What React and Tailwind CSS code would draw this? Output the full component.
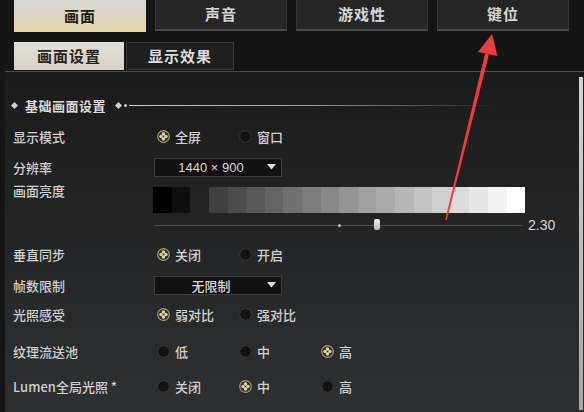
import React from 'react'

const FONT = "font-[family-name:'Noto_Sans_CJK_SC','Noto_Sans',sans-serif]"

function Radio({ on }) {
  if (on) {
    return (
      <svg width="13" height="13" viewBox="0 0 13 13" className="shrink-0">
        <circle cx="6.5" cy="6.5" r="5.8" fill="#2b2920" stroke="#ab9f74" strokeWidth="1.2" />
        <circle cx="6.5" cy="4.1" r="1.8" fill="#ddd3aa" />
        <circle cx="6.5" cy="8.9" r="1.8" fill="#ddd3aa" />
        <circle cx="4.1" cy="6.5" r="1.8" fill="#ddd3aa" />
        <circle cx="8.9" cy="6.5" r="1.8" fill="#ddd3aa" />
        <circle cx="6.5" cy="6.5" r="0.8" fill="#2b2920" />
      </svg>
    )
  }
  return (
    <svg width="13" height="13" viewBox="0 0 13 13" className="shrink-0">
      <circle cx="6.5" cy="6.5" r="5.8" fill="#121212" stroke="#3a3a3a" strokeWidth="1" />
    </svg>
  )
}

function Options({ items, selected }) {
  return (
    <div className="flex">
      {items.map((t, i) => (
        <div key={t} className="w-[82px] flex items-center gap-[5px]">
          <Radio on={i === selected} />
          <span className="text-[13px] leading-none text-[#d2d2d2] font-medium">{t}</span>
        </div>
      ))}
    </div>
  )
}

function Select({ value, sans }) {
  return (
    <div className="w-[128px] h-[19px] bg-[#121212] border border-[#3e3e3e] flex items-center">
      <span
        className={`flex-1 text-center text-[13px] leading-none text-[#d8d8d8] ${
          sans ? "font-[family-name:'Liberation_Sans',sans-serif]" : 'font-medium'
        }`}
      >
        {value}
      </span>
      <svg width="9" height="6" viewBox="0 0 9 6" className="mr-[5px]">
        <path d="M0 0 H9 L4.5 5.5 Z" fill="#e0e0e0" />
      </svg>
    </div>
  )
}

function Row({ label, className = '', children }) {
  return (
    <div className={`flex items-center h-[20px] ${className}`}>
      <div className="w-[145px] pl-[8px] text-[13px] leading-none text-[#d0d0d0] font-medium">{label}</div>
      {children}
    </div>
  )
}

// stepped grey scale for the brightness calibration strip
const steps = Array.from({ length: 17 }, (_, i) => {
  const v = Math.round(64 + (i / 16) * 191)
  return `rgb(${v},${v},${v})`
})

function Tab({ label, active }) {
  return active ? (
    <div className="w-[132px] h-[32px] flex items-center justify-center bg-gradient-to-b from-[#d9d8d3] via-[#dcd6c4] to-[#e8d8a4] text-[#241d12] text-[15px] font-bold tracking-[1px]">
      {label}
    </div>
  ) : (
    <div className="w-[132px] h-[31px] flex items-center justify-center bg-[#262626] border-x border-[#363636] border-b-2 border-b-[#4a4a4a] text-[#d6d6d6] text-[15px] font-bold tracking-[1px]">
      {label}
    </div>
  )
}

export default function App() {
  return (
    <div className={`relative w-[584px] h-[412px] overflow-hidden bg-[#151515] ${FONT}`}>
      {/* main tabs */}
      <div className="flex gap-[9px] pl-[14px] h-[32px]">
        <Tab label="画面" active />
        <Tab label="声音" />
        <Tab label="游戏性" />
        <Tab label="键位" />
      </div>

      {/* sub tabs */}
      <div className="flex pl-[14px] mt-[10px] h-[28px] gap-[2px]">
        <div className="w-[110px] flex items-center justify-center bg-gradient-to-b from-[#e2e0da] to-[#d6d2c6] text-[#2a2418] text-[15px] font-bold tracking-[1px]">
          画面设置
        </div>
        <div className="w-[108px] flex items-center justify-center bg-[#1f1f1f] border border-[#383838] text-[#dcdcdc] text-[15px] font-bold tracking-[1px]">
          显示效果
        </div>
      </div>

      <div className="ml-[5px] mt-[1px] h-[1px] bg-[#4c4c4c]" />

      {/* panel */}
      <div className="ml-[5px] flex h-[340px] bg-gradient-to-b from-[#1b1b1b] to-[#2e3032]">
        <div className="flex-1 flex flex-col">
          {/* section header */}
          <div className="flex items-center h-[20px] mt-[23px] pl-[7px]">
            <span className="w-[5px] h-[5px] rotate-45 bg-[#cfcfcf]" />
            <span className="ml-[8px] text-[13px] leading-none text-[#dadada] font-bold tracking-[0.5px]">基础画面设置</span>
            <span className="ml-[10px] w-[5px] h-[5px] rotate-45 bg-[#cfcfcf]" />
            <span className="ml-[3px] w-[3px] h-[3px] rounded-full bg-[#cfcfcf]" />
            <span className="ml-[2px] w-[370px] h-[1px] bg-gradient-to-r from-[#d0d0d0] via-[#9a9a9a] to-transparent" />
          </div>

          <Row label="显示模式" className="mt-[11px]">
            <div className="pl-[7px]"><Options items={['全屏', '窗口']} selected={0} /></div>
          </Row>

          <Row label="分辨率" className="mt-[11px]">
            <div className="pl-[4px]"><Select value="1440 × 900" sans /></div>
          </Row>

          {/* brightness */}
          <div className="flex items-start h-[30px] mt-[6px]">
            <div className="w-[145px] pl-[8px] pt-[1px] text-[13px] leading-[14px] text-[#d0d0d0] font-medium">画面亮度</div>
            <div className="flex mt-[4px] h-[26px] pl-[3px]">
              <div className="w-[19px] bg-black" />
              <div className="w-[18px] bg-[#0f0f0f]" />
              <div className="w-[316px] ml-[19px] flex">
                {steps.map((c, i) => (
                  <div key={i} className="flex-1" style={{ background: c }} />
                ))}
              </div>
            </div>
          </div>

          {/* slider */}
          <div className="flex items-center h-[12px] mt-[6px]">
            <div className="w-[145px]" />
            <div className="relative w-[367px] h-[12px] flex items-center ml-[5px]">
              <div className="w-full h-[1px] bg-[#4e4e4e]" />
              <span className="absolute left-[183px] top-[5px] w-[3px] h-[3px] rounded-full bg-[#bdbdbd]" />
              <span className="absolute left-[219px] top-[0px] w-[6px] h-[11px] rounded-[2px] bg-gradient-to-b from-[#f2f2f2] to-[#b8b8b8]" />
            </div>
            <span className="ml-[6px] text-[14px] leading-none text-[#d6d6d6] font-[family-name:'Liberation_Sans',sans-serif]">2.30</span>
          </div>

          <Row label="垂直同步" className="mt-[13px]">
            <div className="pl-[7px]"><Options items={['关闭', '开启']} selected={0} /></div>
          </Row>

          <Row label="帧数限制" className="mt-[11px]">
            <div className="pl-[4px]"><Select value="无限制" /></div>
          </Row>

          <Row label="光照感受" className="mt-[9px]">
            <div className="pl-[7px]"><Options items={['弱对比', '强对比']} selected={0} /></div>
          </Row>

          <Row label="纹理流送池" className="mt-[17px]">
            <div className="pl-[7px]"><Options items={['低', '中', '高']} selected={2} /></div>
          </Row>

          <Row label="Lumen全局光照 *" className="mt-[15px]">
            <div className="pl-[7px]"><Options items={['关闭', '中', '高']} selected={1} /></div>
          </Row>
        </div>
        <div className="w-[4px] mt-[5px] mb-[2px] mr-[1px] bg-gradient-to-b from-[#d4d4d4] to-[#a8a8a8]" />
      </div>

      {/* red annotation arrow */}
      <svg className="absolute inset-0 pointer-events-none" width="584" height="412" viewBox="0 0 584 412">
        <polygon points="488.9,54.5 485.1,53.5 445.2,219.8 446.8,220.2" fill="#ee3b3b" />
        <polygon points="492,34 478,52 497.5,56" fill="#ee3b3b" />
      </svg>
    </div>
  )
}
